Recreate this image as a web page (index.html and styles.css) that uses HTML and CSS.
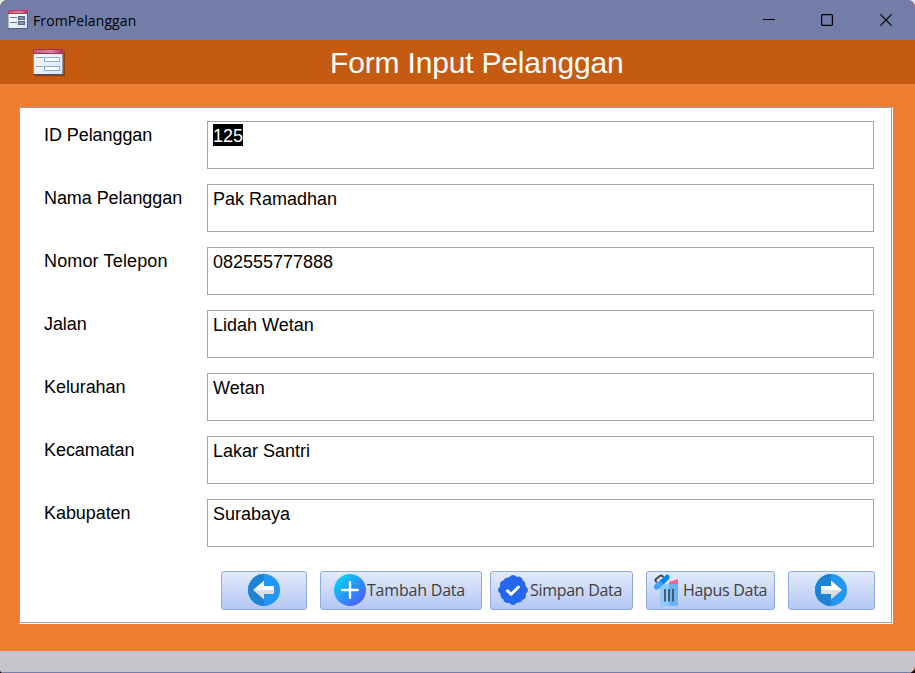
FILE: index.html
```html
<!DOCTYPE html>
<html lang="id">
<head>
<meta charset="utf-8">
<title>FromPelanggan</title>
<link rel="stylesheet" href="styles.css">
</head>
<body>
<div class="window">
  <header class="titlebar">
    <svg class="app-icon" width="20" height="20" viewBox="0 0 20 20">
      <defs>
        <linearGradient id="rose"><stop offset="0" stop-color="#c0587c"/><stop offset=".6" stop-color="#d58aa8"/><stop offset="1" stop-color="#b04068"/></linearGradient>
        <linearGradient id="paper" x2="1" y2="1"><stop offset="0" stop-color="#fff"/><stop offset="1" stop-color="#d9e3f3"/></linearGradient>
      </defs>
      <rect x=".5" y=".5" width="19" height="18" fill="url(#paper)" stroke="#a9b3cd"/>
      <path d="M0 18.5h20M19.5 4v15" stroke="#506282"/>
      <rect width="20" height="4" fill="#b83a60"/><rect x="1" y="1" width="18" height="2" fill="url(#rose)"/>
      <path d="M2 7.5h7M2 12.5h7" stroke="#657796"/>
      <rect x="10.7" y="6.7" width="5.6" height="2.6" fill="#a9bad6" stroke="#586a8b" stroke-width="1.4"/>
      <rect x="10.7" y="11.7" width="5.6" height="2.6" fill="#a9bad6" stroke="#586a8b" stroke-width="1.4"/>
    </svg>
    <span class="caption">FromPelanggan</span>
    <div class="controls">
      <svg width="12" height="12"><path d="M0 5.5h12" stroke="#000"/></svg>
      <svg width="12" height="12"><rect x=".6" y=".6" width="10.8" height="10.8" rx="1" fill="none" stroke="#000" stroke-width="1.2"/></svg>
      <svg width="12" height="12"><path d="M.4.4l11.2 11.2M11.6.4L.4 11.6" stroke="#000" stroke-width="1.2"/></svg>
    </div>
  </header>

  <div class="form-header">
    <svg class="form-icon" width="32" height="28" viewBox="0 0 32 28">
      <path d="M2 26.5h29.5V2" fill="none" stroke="#5b2a0b" stroke-opacity=".55" stroke-width="1.6"/>
      <rect x=".5" y=".5" width="29" height="25" fill="url(#paper)" stroke="#8496ba"/>
      <path d="M0 25.5h30" stroke="#3f536f"/>
      <rect width="30" height="5" fill="#a82e55"/><rect x="1" y="1" width="28" height="3" fill="url(#rose)"/>
      <path d="M3 8.5h7M3 17.5h7" stroke="#7fa3d3"/>
      <rect x="11.5" y="8.5" width="15" height="4" fill="#fff" stroke="#8aaddb"/>
      <rect x="11.5" y="17.5" width="15" height="4" fill="#fff" stroke="#8aaddb"/>
    </svg>
    <h1>Form Input Pelanggan</h1>
  </div>

  <main class="body">
    <div class="panel">
      <div class="fields">
        <div class="row"><label>ID Pelanggan</label><div class="field"><span class="selected">125</span></div></div>
        <div class="row"><label>Nama Pelanggan</label><div class="field">Pak Ramadhan</div></div>
        <div class="row"><label class="wide">Nomor Telepon</label><div class="field">082555777888</div></div>
        <div class="row"><label>Jalan</label><div class="field">Lidah Wetan</div></div>
        <div class="row"><label>Kelurahan</label><div class="field">Wetan</div></div>
        <div class="row"><label>Kecamatan</label><div class="field">Lakar Santri</div></div>
        <div class="row"><label>Kabupaten</label><div class="field">Surabaya</div></div>
      </div>
      <div class="actions">
        <button class="prev" aria-label="Sebelumnya">
          <svg width="32" height="32" viewBox="0 0 32 32"><circle cx="16" cy="16" r="16" fill="#2196f3"/><path d="M16 0a16 16 0 0 0 0 32z" fill="#1e83d3"/><path d="M5 16L16 6.5V12h9q1 0 1 1v3z" fill="#fff"/><path d="M5 16h21v3q0 1-1 1h-9v5.5z" fill="#dedede"/></svg>
        </button>
        <button class="add">
          <svg width="32" height="32" viewBox="0 0 32 32"><defs><linearGradient id="plus" x1=".1" y1=".15" x2=".85" y2=".9"><stop offset="0" stop-color="#08d0f8"/><stop offset="1" stop-color="#4b5df7"/></linearGradient></defs><circle cx="16" cy="16" r="16" fill="url(#plus)"/><path d="M16 8.3v15.4M8.3 16h15.4" stroke="#fff" stroke-width="2.4" stroke-linecap="round"/></svg>
          <span>Tambah Data</span>
        </button>
        <button class="save">
          <svg width="30" height="30" viewBox="0 0 30 30"><path d="M15 0Q17 0 18.8 2Q21.5 1 23.2 2.6Q24.6 3.5 24.9 5.5Q27.5 6.6 27.5 9.7L27.6 11.2Q30 13 30 15T27.7 18.8Q28.5 21.5 27.1 22.9Q26.2 24.5 24.3 24.7Q23.2 27.6 20.3 27.6L18.8 27.7Q17 30 15 30T11.2 27.7Q8.5 28.5 7.1 27.2Q5.5 26.2 5.2 24.3Q2.5 23.2 2.5 20.3L2.3 18.8Q0 17 0 15T2.3 11.2Q1.5 8.5 2.8 7.1Q3.6 5.5 5.7 5.2Q6.8 2.5 9.7 2.4L11.2 2.2Q13 0 15 0Z" fill="#2467ed"/><path d="M9.5 15.8l3.7 3.5 7.2-7.3" fill="none" stroke="#fff" stroke-width="3" stroke-linecap="round" stroke-linejoin="round"/></svg>
          <span>Simpan Data</span>
        </button>
        <button class="delete">
          <svg width="25" height="32" viewBox="0 0 25 32"><path d="M15 8l9-3v5l-9 1z" fill="#ff5c91"/><path d="M6 10h18v19.5q0 2.5-2.5 2.5h-13Q6 32 6 29.5z" fill="#91caff"/><path d="M15 10h9v19.5q0 2.5-2.5 2.5H15z" fill="#6ab4fb"/><path d="M2.8 8.5L1.7 7Q1 6 2 5L6 2Q7.5 1 8.6 2.2L9.5 3.2" fill="none" stroke="#3c494f" stroke-width="2"/><path d="M2.6 12.8L8.5 7.7" stroke="#40a2ff" stroke-width="5.6" stroke-linecap="round"/><path d="M6.2 6.4L11.7 1.2Q13 0 14.5.8Q16.2 2.2 15.4 4.4L9.8 10.2z" fill="#0083f5"/><path d="M11 15v12.5M15 15v12.5M19 15v12.5" stroke="#36474f" stroke-width="1.6"/></svg>
          <span>Hapus Data</span>
        </button>
        <button class="next" aria-label="Berikutnya">
          <svg width="32" height="32" viewBox="0 0 32 32"><circle cx="16" cy="16" r="16" fill="#2196f3"/><path d="M16 0a16 16 0 0 0 0 32z" fill="#1e83d3"/><path d="M27 16L16 6.5V12H7q-1 0-1 1v3z" fill="#fff"/><path d="M27 16H6v3q0 1 1 1h9v5.5z" fill="#dedede"/></svg>
        </button>
      </div>
    </div>
  </main>
  <footer class="status"></footer>
</div>
</body>
</html>
```
FILE: styles.css
```css
* { box-sizing: border-box; }

body {
  margin: 0;
  background: linear-gradient(#e8e8ea 50%, #180808 50%);
  font-family: "Liberation Sans", Arial, sans-serif;
  color: #000;
}

.window {
  display: flex;
  flex-direction: column;
  height: 673px;
  overflow: hidden;
  border-radius: 7px 7px 7px 4px;
  background: #ed7d31;
}

.titlebar {
  display: flex;
  align-items: center;
  flex: 0 0 40px;
  padding: 0 23px 0 8px;
  background: #737ea8;
}

.app-icon { margin-top: 0; }

.caption {
  margin: 1px 0 0 5px;
  font: 14px/20px "Open Sans", sans-serif;
  letter-spacing: 0.1px;
}

.controls {
  display: flex;
  gap: 46px 47px;
  margin-left: auto;
}

.controls svg:first-child { margin-right: -1px; }

.form-header {
  display: flex;
  align-items: center;
  flex: 0 0 44px;
  padding-left: 33px;
  background: #c55a11;
}

.form-icon { margin-top: 2px; }

h1 {
  margin: 2px 0 0 265px;
  font-size: 30px;
  font-weight: 400;
  line-height: 40px;
  letter-spacing: -0.17px;
  color: #fff;
  white-space: nowrap;
}

.body {
  flex: 1;
  padding: 23px 22px 27px 19px;
}

.panel {
  height: 517px;
  padding: 13px 17px 0 24px;
  background: #fff;
  border-top: 1px solid #a0a0a0;
  border-left: 1px solid #a0a0a0;
  border-right: 1px solid #fff;
  border-bottom: 1px solid #fff;
  box-shadow: inset -1px -1px #a0a0a0;
}

.fields {
  display: flex;
  flex-direction: column;
  gap: 15px;
}

.row {
  display: grid;
  grid-template-columns: 163px 667px;
  height: 48px;
  font-size: 18px;
  line-height: 22px;
}

label {
  padding-top: 3px;
  letter-spacing: -0.07px;
}

.wide { letter-spacing: 0.15px; }

.field {
  padding: 3px 6px 3px 5px;
  border: 1px solid #a6a6a6;
}

.selected {
  display: inline-block;
  height: 22px;
  margin-top: -1px;
  padding-top: 1px;
  background: #000;
  color: #fff;
}

.actions {
  display: flex;
  margin: 24px 0 0 177px;
}

button {
  display: flex;
  align-items: center;
  height: 39px;
  padding: 0;
  border: 1px solid #8faadc;
  border-radius: 3px;
  background: linear-gradient(#e3eafb, #b4c7f4);
  font: 16px/20px "Open Sans", sans-serif;
  letter-spacing: -0.3px;
  color: #404040;
  white-space: nowrap;
}

button svg { flex: none; margin-top: -1px; }
button span { margin-top: -1px; }

.prev { width: 86px; padding-left: 26px; }
.add { width: 162px; margin-left: 13px; padding-left: 13px; letter-spacing: -0.2px; }
.save { width: 143px; margin-left: 8px; padding-left: 7px; }
.delete { width: 129px; margin-left: 13px; padding-left: 7px; }
.next { width: 87px; margin-left: 13px; padding-left: 26px; }
.add span { margin-left: 1px; }
.save span { margin-left: 2px; }
.delete span { margin-left: 4px; }

.status {
  flex: 0 0 22px;
  background: #c5c6cb;
  border-bottom: 1px solid #737ea8;
}
```
